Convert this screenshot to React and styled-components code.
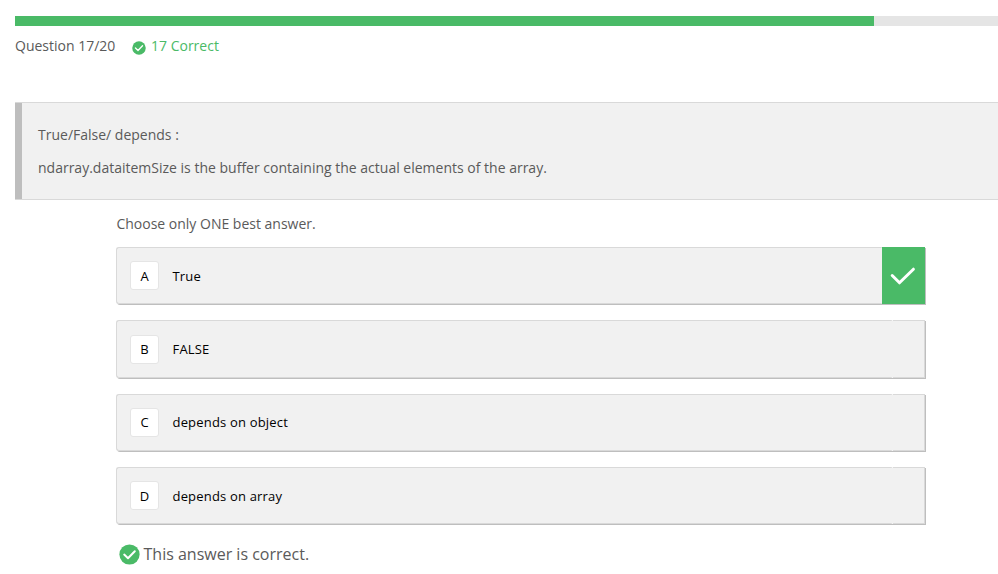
import React from "react";
import styled, { createGlobalStyle } from "styled-components";

const GREEN = "#4aba67";

const GlobalStyle = createGlobalStyle`
  *, *::before, *::after { box-sizing: border-box; }
  body {
    margin: 0;
    background: #fff;
    color: #5a5a5a;
    font-family: "Open Sans", "Noto Sans", sans-serif;
    font-size: 14px;
    overflow: hidden;
  }
`;

const Page = styled.main`
  height: 574px;
  padding: 16px 0 0 15px;
`;

const Track = styled.div`
  height: 10px;
  background: #e5e5e5;
`;

const Progress = styled.div`
  width: 859px;
  height: 100%;
  background: ${GREEN};
`;

const Status = styled.div`
  display: flex;
  align-items: center;
  height: 20px;
  margin-top: 10px;
  line-height: 20px;
  white-space: nowrap;
`;

const Counter = styled.span`
  width: 117px;
`;

const Score = styled.span`
  display: flex;
  align-items: center;
  gap: 5px;
  color: ${GREEN};

  svg { margin-top: 3px; }
`;

const Question = styled.section`
  height: 98px;
  margin-top: 46px;
  padding: 22px 0 0 23px;
  border: solid #d9d9d9;
  border-width: 1px 0;
  background: #f1f1f1;
  box-shadow: inset 7px 0 #bebebe;
`;

const Paragraph = styled.p`
  margin: 0 0 13px;
  line-height: 20px;
`;

const Answers = styled.section`
  width: 809px;
  margin: 14px 0 0 101px;
`;

const Hint = styled.p`
  margin: 0 0 13px;
  line-height: 20px;
  text-indent: 0.4px;
`;

const OptionList = styled.div`
  display: grid;
  grid-template-rows: 57px 58px 57px 57px;
  row-gap: 16px;
`;

const Option = styled.div`
  display: flex;
  border-radius: 3px 0 0 3px;
  background: #f1f1f1;
  box-shadow: 1px 1px #bebebe;
  color: #000;
  font-size: 13px;
`;

const Body = styled.div`
  flex: 1;
  display: flex;
  align-items: center;
  padding-left: 13px;
  border: 1px solid #d9d9d9;
  border-right: 0;
  border-radius: 3px 1px 1px 3px;
`;

const Letter = styled.span`
  display: grid;
  place-items: center;
  width: 29px;
  height: 29px;
  margin-right: 13.5px;
  padding-bottom: ${(p) => (p.$raised ? 2 : 0)}px;
  border: 1px solid #e5e5e5;
  border-radius: 3px;
  background: #fff;
`;

const Label = styled.span`
  height: 18px;
  margin-bottom: ${(p) => (p.$raised ? 2 : 0)}px;
  line-height: 18px;
  letter-spacing: 0.18px;
`;

const Marker = styled.div`
  display: grid;
  place-items: center;
  width: ${(p) => (p.$correct ? 43 : 33)}px;
  padding-right: ${(p) => (p.$correct ? 1 : 0)}px;
  border: ${(p) => (p.$correct ? "0" : "1px solid #d9d9d9")};
  border-left: 0;
  background: ${(p) => (p.$correct ? GREEN : "#f1f1f1")};

  /* light seam where the marker joins the option body */
  &::before {
    content: "";
    display: ${(p) => (p.$correct ? "none" : "block")};
    justify-self: start;
    width: 1px;
    height: calc(100% + 2px);
    border: solid #f4f4f4;
    border-width: 1px 0;
  }
`;

const Feedback = styled.div`
  display: flex;
  align-items: center;
  gap: 3.5px;
  height: 24px;
  margin: 18px 0 0 3px;
  font-size: 16px;
`;

function CheckCircle({ size }) {
  return (
    <svg width={size} height={size} viewBox="0 0 21 21" fill="none">
      <circle cx="10.5" cy="10.5" r="10.1" fill={GREEN} />
      <path
        d="M5.2 10.6L9 14.2L15.8 7.2"
        stroke="#fff"
        strokeWidth="2"
        strokeLinecap="round"
        strokeLinejoin="round"
      />
    </svg>
  );
}

function LargeCheck() {
  return (
    <svg width="26" height="20" viewBox="0 0 26 20" fill="none">
      <path
        d="M2.2 9.5L9.5 16.8L23.4 3.2"
        stroke="#fff"
        strokeWidth="3"
        strokeLinecap="round"
        strokeLinejoin="round"
      />
    </svg>
  );
}

const options = [
  { letter: "A", text: "True", correct: true },
  { letter: "B", text: "FALSE" },
  { letter: "C", text: "depends on object", raised: true },
  { letter: "D", text: "depends on array" },
];

export default function App() {
  return (
    <Page>
      <GlobalStyle />
      <Track>
        <Progress />
      </Track>
      <Status>
        <Counter>Question 17/20</Counter>
        <Score>
          <CheckCircle size={14} />
          17 Correct
        </Score>
      </Status>
      <Question>
        <Paragraph>True/False/ depends :</Paragraph>
        <Paragraph>
          ndarray.dataitemSize is the buffer containing the actual elements of the array.
        </Paragraph>
      </Question>
      <Answers>
        <Hint>Choose only ONE best answer.</Hint>
        <OptionList>
          {options.map(({ letter, text, correct, raised }) => (
            <Option key={letter}>
              <Body>
                <Letter $raised={raised}>{letter}</Letter>
                <Label $raised={raised}>{text}</Label>
              </Body>
              <Marker $correct={correct}>{correct && <LargeCheck />}</Marker>
            </Option>
          ))}
        </OptionList>
        <Feedback>
          <CheckCircle size={21} />
          This answer is correct.
        </Feedback>
      </Answers>
    </Page>
  );
}
